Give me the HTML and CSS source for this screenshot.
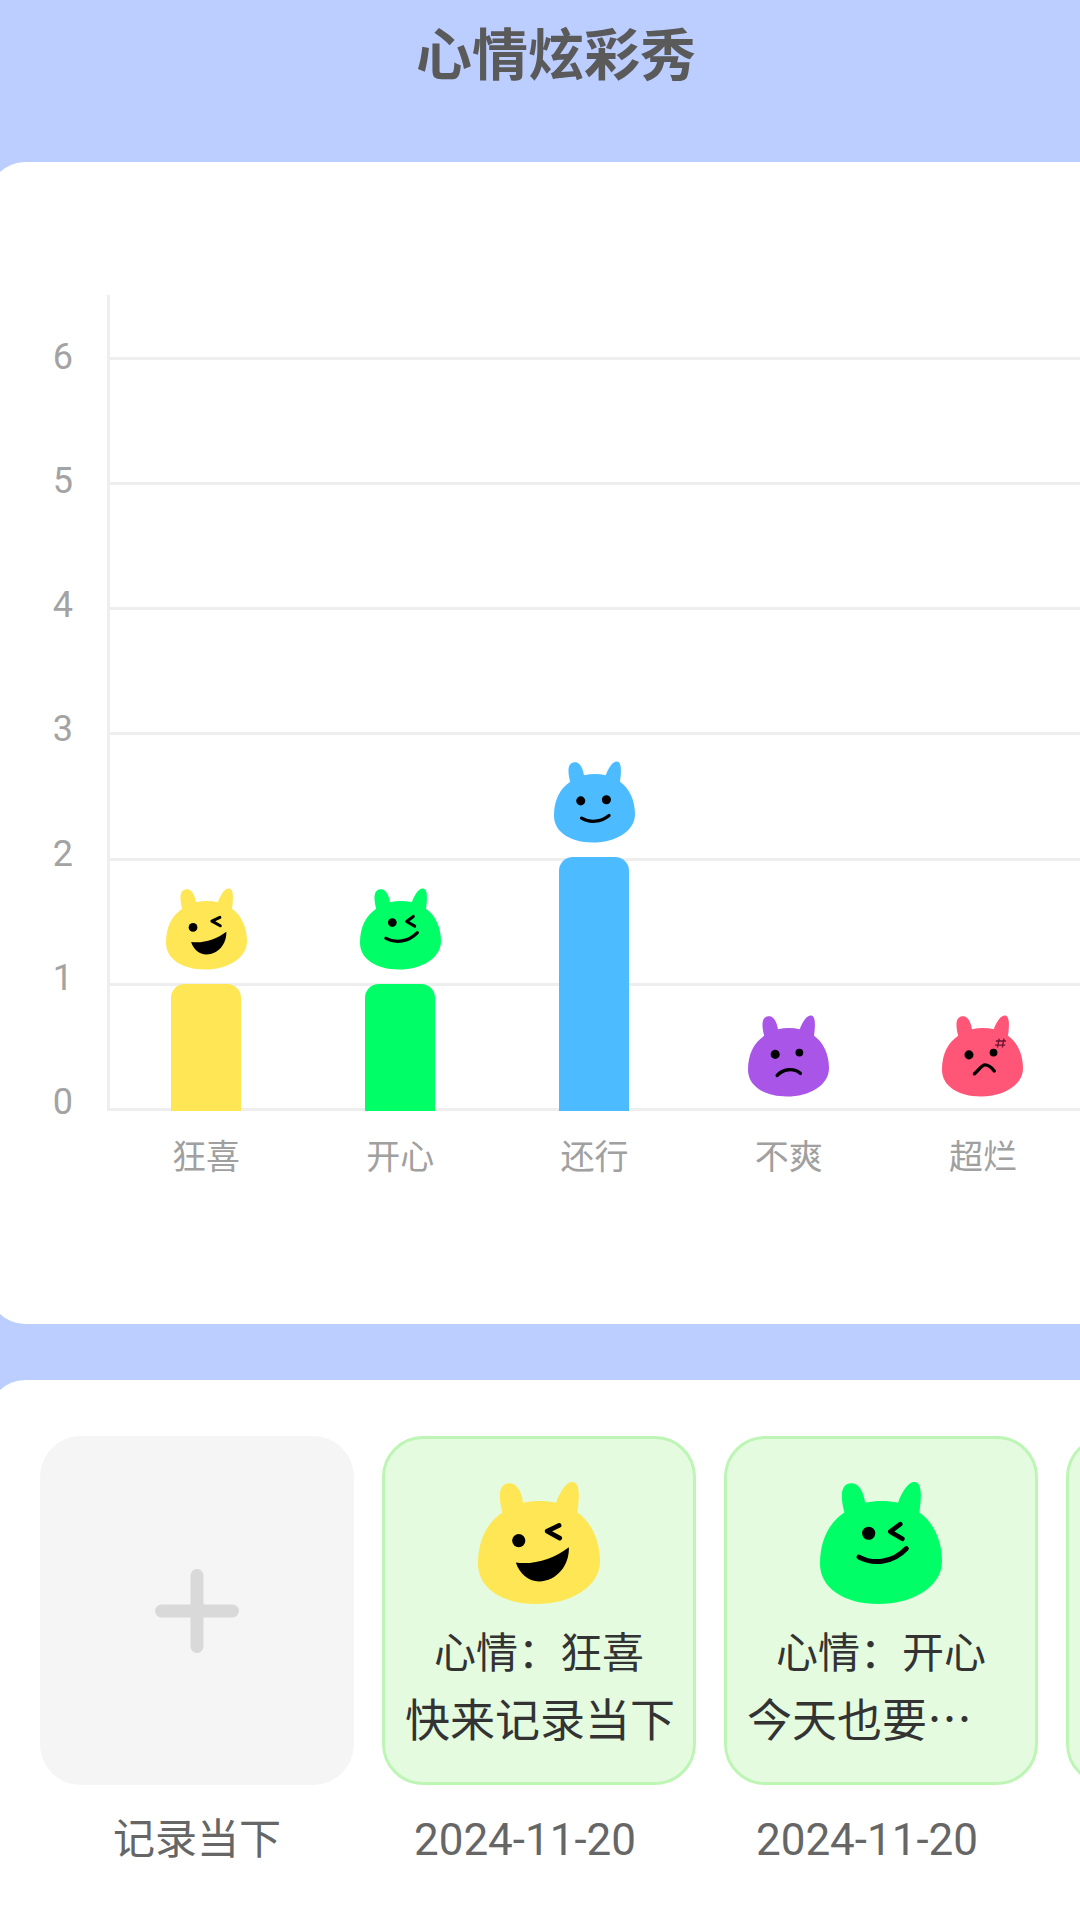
FILE: index.html
```html
<!DOCTYPE html>
<html lang="zh-CN">

<head>
    <meta charset="UTF-8">
    <meta name="viewport" content="width=device-width, initial-scale=1.0">
    <title>心情炫彩秀</title>
    <link rel="stylesheet" href="styles.css">
</head>

<body>
    <svg class="sprites" width="0" height="0">
        <defs>
            <path id="body" d="M20 25C17 14 16 2 25 1C32 0 36 9 37 17C46 15 55 15 64 17C67 8 73 -1 78 0C84 1 83 13 81.5 25C93 33 100 48 100 65C100 86 76 100 48 100C20 100 0 87 0 67C0 47 8 33 20 25Z" />
        </defs>
        <symbol id="mood-wild" viewBox="0 0 100 100">
            <use href="#body" fill="#ffe655" />
            <circle cx="33.4" cy="48" r="5.4" fill="#000" />
            <path d="M66.5 35.6L56.7 40.3L67 46" fill="none" stroke="#000" stroke-width="3.8" stroke-linecap="round" stroke-linejoin="round" />
            <path d="M31 66C46 68 62 63 74.5 53.4C75 68 65 81 50 81.5C41 81.5 34 75 31 66Z" fill="#000" />
        </symbol>
        <symbol id="mood-happy" viewBox="0 0 100 100">
            <use href="#body" fill="#00ff66" />
            <circle cx="39.9" cy="42" r="5.4" fill="#000" />
            <path d="M65.8 34.5L57.6 40.7L67.5 46.5" fill="none" stroke="#000" stroke-width="3.8" stroke-linecap="round" stroke-linejoin="round" />
            <path d="M32 61.5C44 68 60 66 70.8 54.5" fill="none" stroke="#000" stroke-width="4" stroke-linecap="round" />
        </symbol>
        <symbol id="mood-ok" viewBox="0 0 100 100">
            <use href="#body" fill="#4dbbff" />
            <circle cx="33" cy="48.6" r="5.6" fill="#000" />
            <circle cx="64.7" cy="47.3" r="5.6" fill="#000" />
            <path d="M34 70C44 76 58 75 68 66.7" fill="none" stroke="#000" stroke-width="4" stroke-linecap="round" />
        </symbol>
        <symbol id="mood-sad" viewBox="0 0 100 100">
            <use href="#body" fill="#a855e8" />
            <circle cx="33.6" cy="48" r="5.6" fill="#000" />
            <circle cx="63.4" cy="45.7" r="4.8" fill="#000" />
            <path d="M36 74C43 66 56 64 64.6 71.4" fill="none" stroke="#000" stroke-width="4.2" stroke-linecap="round" />
        </symbol>
        <symbol id="mood-bad" viewBox="0 0 100 100">
            <use href="#body" fill="#ff5577" />
            <circle cx="33.3" cy="48.6" r="5.6" fill="#000" />
            <circle cx="63.6" cy="45.7" r="4.8" fill="#000" />
            <path d="M40 72C46 67 49 61 53 61C57 61 61 64 64.5 68.5" fill="none" stroke="#000" stroke-width="4.2" stroke-linecap="round" />
            <path d="M70.5 28.5L68.5 39.5M76.5 28.5L74.5 39.5M66.5 31.5H79M65.5 36.5H78" fill="none" stroke="#6b1230" stroke-width="1.6" />
        </symbol>
    </svg>

    <header class="header">
        <h1 class="title">心情炫彩秀</h1>
    </header>

    <section class="card chart-card">
        <div class="chart-body">
            <div class="y-labels">
                <span>6</span>
                <span>5</span>
                <span>4</span>
                <span>3</span>
                <span>2</span>
                <span>1</span>
                <span>0</span>
            </div>
            <div class="plot">
                <div class="grid-lines">
                    <div class="grid-row"></div>
                    <div class="grid-row"></div>
                    <div class="grid-row"></div>
                    <div class="grid-row"></div>
                    <div class="grid-row"></div>
                    <div class="grid-row"></div>
                </div>
                <div class="bars">
                    <div class="bar-col">
                        <svg class="bar-face"><use href="#mood-wild" /></svg>
                        <div class="bar bar-yellow" style="height: 127px"></div>
                    </div>
                    <div class="bar-col">
                        <svg class="bar-face"><use href="#mood-happy" /></svg>
                        <div class="bar bar-green" style="height: 127px"></div>
                    </div>
                    <div class="bar-col">
                        <svg class="bar-face"><use href="#mood-ok" /></svg>
                        <div class="bar bar-blue" style="height: 254px"></div>
                    </div>
                    <div class="bar-col">
                        <svg class="bar-face"><use href="#mood-sad" /></svg>
                    </div>
                    <div class="bar-col">
                        <svg class="bar-face"><use href="#mood-bad" /></svg>
                    </div>
                </div>
            </div>
        </div>
        <div class="x-labels">
            <span>狂喜</span>
            <span>开心</span>
            <span>还行</span>
            <span>不爽</span>
            <span>超烂</span>
        </div>
    </section>

    <section class="card list-card">
        <div class="entry">
            <div class="tile tile-add">
                <svg class="plus" viewBox="0 0 84 84">
                    <rect x="0" y="35.5" width="84" height="13" rx="6.5" />
                    <rect x="35.5" y="0" width="13" height="84" rx="6.5" />
                </svg>
            </div>
            <div class="caption">记录当下</div>
        </div>
        <div class="entry">
            <div class="tile tile-mood">
                <svg class="tile-face"><use href="#mood-wild" /></svg>
                <div class="mood-name">心情：狂喜</div>
                <div class="mood-note">快来记录当下</div>
            </div>
            <div class="caption-date">2024-11-20</div>
        </div>
        <div class="entry">
            <div class="tile tile-mood">
                <svg class="tile-face"><use href="#mood-happy" /></svg>
                <div class="mood-name">心情：开心</div>
                <div class="mood-note">今天也要…</div>
            </div>
            <div class="caption-date">2024-11-20</div>
        </div>
        <div class="entry">
            <div class="tile tile-mood"></div>
        </div>
    </section>
</body>

</html>
```

FILE: styles.css
```css
* {
    box-sizing: border-box;
}

html,
body {
    margin: 0;
    padding: 0;
}

body {
    width: 1080px;
    height: 1920px;
    overflow: hidden;
    background-color: #bccdff;
    font-family: "Noto Sans CJK SC", sans-serif;
}

.sprites {
    display: block;
    height: 0;
}

.header {
    height: 162px;
    padding: 18px 0 0 32px;
}

.title {
    margin: 0;
    font-size: 56px;
    line-height: 66px;
    font-weight: 700;
    color: #5a5a5a;
    text-align: center;
}

.card {
    margin: 0 -60px 0 -11px;
    background-color: #fff;
    border-radius: 36px;
}

.chart-card {
    height: 1162px;
    padding: 133px 60px 0 11px;
}

.chart-body {
    display: flex;
    height: 816px;
}

.y-labels {
    width: 107px;
    flex-shrink: 0;
    margin-bottom: -13px;
    padding: 40px 34px 0 0;
    display: flex;
    flex-direction: column;
    justify-content: space-between;
    align-items: flex-end;
    font-family: Roboto, sans-serif;
    font-size: 36px;
    line-height: 44px;
    color: #a3a3a3;
}

.plot {
    position: relative;
    flex: 1;
    border-left: 3px solid #eee;
}

.grid-lines {
    position: absolute;
    left: 0;
    right: 0;
    bottom: 0;
    border-bottom: 3px solid #eee;
}

.grid-row {
    height: 125.25px;
    border-top: 3px solid #eee;
}

.bars {
    position: relative;
    height: 100%;
    display: grid;
    grid-template-columns: repeat(5, 1fr);
    margin-left: -1px;
}

.bar-col {
    display: flex;
    flex-direction: column;
    justify-content: flex-end;
    align-items: center;
}

.bar-face {
    width: 81px;
    height: 82px;
    margin-bottom: 14px;
}

.bar {
    width: 70px;
    border-radius: 14px 14px 0 0;
}

.bar-yellow {
    background-color: #ffe655;
}

.bar-green {
    background-color: #00ff66;
}

.bar-blue {
    background-color: #4dbbff;
}

.x-labels {
    display: grid;
    grid-template-columns: repeat(5, 1fr);
    margin: 22px 0 0 109px;
    font-size: 34px;
    line-height: 44px;
    color: #a0a0a0;
    text-align: center;
}

.list-card {
    height: 600px;
    margin-top: 56px;
    padding: 56px 0 0 51px;
    display: flex;
    gap: 28px;
}

.entry {
    width: 314px;
    flex-shrink: 0;
}

.tile {
    height: 349px;
    border-radius: 41px;
}

.tile-add {
    background-color: #f5f5f5;
    display: flex;
    align-items: center;
    justify-content: center;
}

.plus {
    width: 84px;
    height: 84px;
    fill: #d9d9d9;
}

.tile-mood {
    padding: 43px 20px 0;
    background-color: #e4fbe0;
    border: 3px solid #bdf5b5;
    display: flex;
    flex-direction: column;
    align-items: center;
}

.tile-face {
    width: 122px;
    height: 122px;
    flex-shrink: 0;
}

.mood-name {
    margin-top: 21px;
    font-size: 42px;
    line-height: 50px;
    color: #333;
}

.mood-note {
    width: 100%;
    margin-top: 13px;
    font-size: 45px;
    line-height: 60px;
    color: #333;
    white-space: nowrap;
}

.caption {
    margin-top: 21px;
    font-size: 42px;
    line-height: 60px;
    color: #666;
    text-align: center;
}

.caption-date {
    margin-top: 25px;
    padding-right: 28px;
    font-family: Roboto, sans-serif;
    font-size: 44px;
    line-height: 60px;
    color: #666;
    text-align: center;
}
```
